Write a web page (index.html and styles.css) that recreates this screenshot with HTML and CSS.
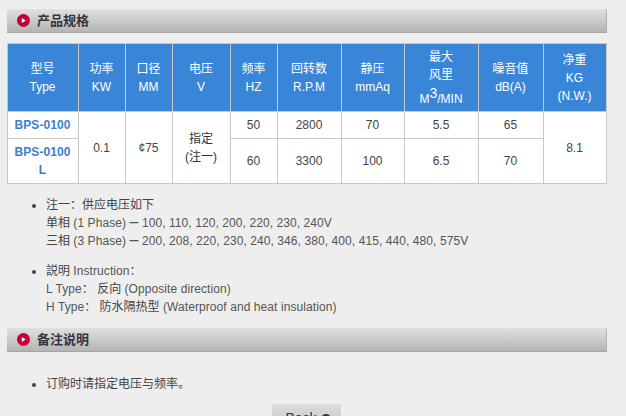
FILE: index.html
```html
<!DOCTYPE html>
<html lang="zh">
<head>
<meta charset="utf-8">
<title>产品规格</title>
<link rel="stylesheet" href="styles.css">
</head>
<body>
<div class="page">
  <h2 class="bar bar-spec">
    <svg class="bar-icon" width="13" height="13" viewBox="0 0 14 14"><circle cx="7" cy="7" r="7" fill="#c4003a"/><path d="M5.2 4.2 9.4 7 5.2 9.8z" fill="#fff"/></svg>
    <span>产品规格</span>
  </h2>
  <table class="spec">
    <colgroup>
      <col class="c1"><col class="c2"><col class="c3"><col class="c4"><col class="c5"><col class="c6"><col class="c7"><col class="c8"><col class="c9"><col class="c10">
    </colgroup>
    <thead>
      <tr>
        <th>型号<br>Type</th>
        <th>功率<br>KW</th>
        <th>口径<br>MM</th>
        <th>电压<br>V</th>
        <th>频率<br>HZ</th>
        <th>回转数<br>R.P.M</th>
        <th>静压<br>mmAq</th>
        <th>最大<br>风里<br>M<sup>3</sup>/MIN</th>
        <th>噪音值<br>dB(A)</th>
        <th>净重<br>KG<br>(N.W.)</th>
      </tr>
    </thead>
    <tbody>
      <tr class="r1">
        <td class="model">BPS-0100</td>
        <td rowspan="2">0.1</td>
        <td rowspan="2">¢75</td>
        <td rowspan="2" class="dark">指定<br>(注一)</td>
        <td>50</td><td>2800</td><td>70</td><td>5.5</td><td>65</td>
        <td rowspan="2">8.1</td>
      </tr>
      <tr class="r2">
        <td class="model">BPS-0100<br>L</td>
        <td>60</td><td>3300</td><td>100</td><td>6.5</td><td>70</td>
      </tr>
    </tbody>
  </table>
  <ul class="notes">
    <li>注一：供应电压如下<br>单相 <span class="en">(1 Phase) <span class="dash">–</span> 100, 110, 120, 200, 220, 230, 240V</span><br>三相 <span class="en">(3 Phase) <span class="dash">–</span> 200, 208, 220, 230, 240, 346, 380, 400, 415, 440, 480, 575V</span></li>
    <li>説明 <span class="en">Instruction</span>：<br><span class="en">L Type</span>： 反向 <span class="en">(Opposite direction)</span><br><span class="en">H Type</span>： 防水隔热型 <span class="en">(Waterproof and heat insulation)</span></li>
  </ul>
  <h2 class="bar">
    <svg class="bar-icon" width="13" height="13" viewBox="0 0 14 14"><circle cx="7" cy="7" r="7" fill="#c4003a"/><path d="M5.2 4.2 9.4 7 5.2 9.8z" fill="#fff"/></svg>
    <span>备注说明</span>
  </h2>
  <ul class="order">
    <li>订购时请指定电压与频率。</li>
  </ul>
  <div class="actions">
    <a class="back">Back <svg width="10" height="10" viewBox="0 0 11 11"><circle cx="5.5" cy="5.5" r="5.5" fill="#333"/><path d="M4 2.5 7.5 5.5 4 8.5z" fill="#eee"/></svg></a>
  </div>
</div>
</body>
</html>
```
FILE: styles.css
```css
html, body {
  margin: 0;
  height: 416px;
  overflow: hidden;
  background: #eeeeee;
}
.page {
  width: 600px;
  padding: 9px 19px 0 7px;
  font: 12px/18px "Liberation Sans", "Noto Sans CJK SC", sans-serif;
  color: #444;
}
.bar {
  display: flex;
  align-items: center;
  gap: 7px;
  height: 23px;
  margin: 0;
  padding-left: 10px;
  background: linear-gradient(#e0e0e0, #b4b4b4);
  border-bottom: 1px solid #a4a4a4;
  border-right: 1px solid #b0b0b0;
  border-radius: 2px 2px 0 0;
  font-size: 13px;
  font-weight: bold;
  color: #3a3340;
}
.bar-icon { flex: none; }
.spec {
  width: 600px;
  margin-top: 10px;
  border-collapse: collapse;
  table-layout: fixed;
  background: #fff;
  text-align: center;
}
.c1 { width: 71px; } .c2 { width: 47px; } .c3 { width: 47px; } .c4 { width: 58px; }
.c5 { width: 47px; } .c6 { width: 64px; } .c7 { width: 63px; } .c8 { width: 74px; }
.c9 { width: 65px; } .c10 { width: 63px; }
.spec th, .spec td {
  border: 1px solid #c8c8c8;
  padding: 0 1px 0 0;
}
.spec th {
  height: 67px;
  background: #3986d9;
  color: #fff;
  font-weight: normal;
}
.spec sup {
  font-size: 14px;
}
.r1 td { height: 26px; }
.r2 td { height: 44px; }
.spec .model { color: #3b7fd0; font-weight: bold; letter-spacing: 0.1px; }
.spec .dark { color: #333; }
.notes, .order {
  margin: 0;
  padding: 0 0 0 39px;
}
.notes { margin-top: 12px; margin-bottom: 12px; }
.notes li { margin-bottom: 12px; }
.notes li:last-child { margin-bottom: 0; }
.notes .en { color: #555; letter-spacing: 0.08px; }
.dash { font-size: 16px; line-height: 0; }
.order { margin-top: 23px; }
.actions {
  display: flex;
  justify-content: center;
  margin-top: 11px;
  padding-right: 2px;
}
.back {
  display: block;
  width: 69px;
  height: 30px;
  box-sizing: border-box;
  padding: 4px 0 0 4px;
  text-align: center;
  border-radius: 2px;
  border-top: 1px solid #ddd;
  background: linear-gradient(#dcdcdc, #c0c0c0);
  font-size: 14px;
  color: #333;
}
.back svg { vertical-align: -1px; }
```
